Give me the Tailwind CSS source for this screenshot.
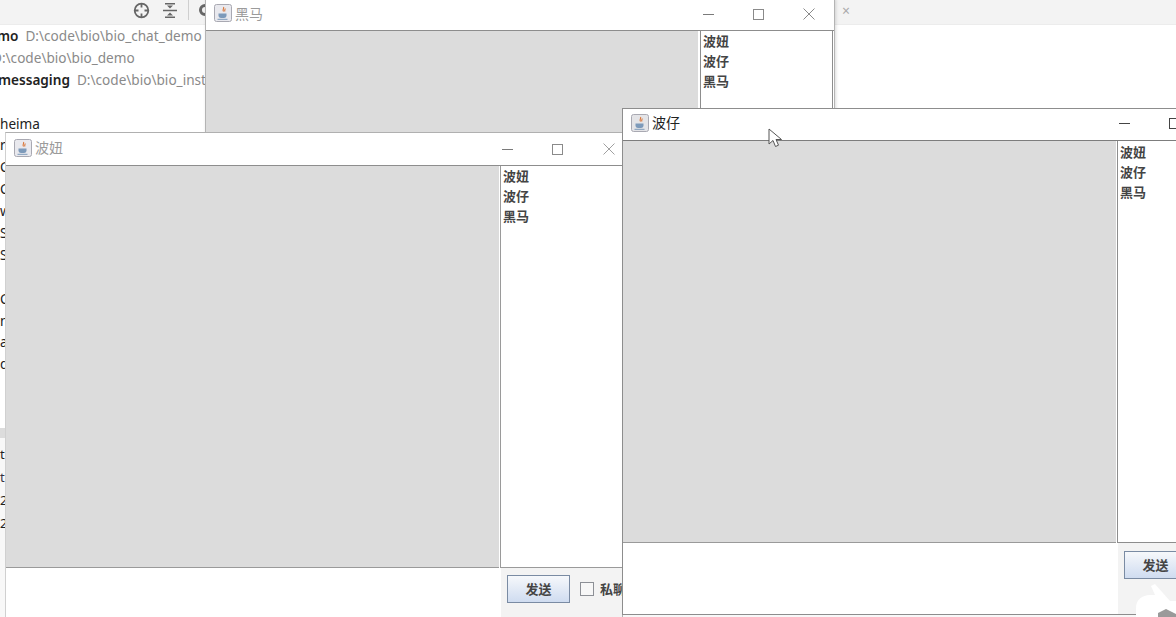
<!DOCTYPE html>
<html lang="en">
<head>
    <meta charset="UTF-8">
    <title>Chat windows</title>
    <script src="https://cdn.jsdelivr.net/npm/@tailwindcss/browser@4"></script>
</head>
<body class="bg-white">
<div class="relative w-[1176px] h-[617px] overflow-hidden bg-white text-[#222] font-['Noto_Sans','Noto_Sans_CJK_SC',sans-serif]">

    <!-- IDE behind the windows -->
    <div class="flex flex-col h-full">
        <div class="flex items-center h-[25px] bg-[#f3f3f3] border-b border-[#ececec]">
            <div class="flex items-center w-[834px] pl-[133px] pb-[4px]">
                <svg class="w-[17px] h-[17px]" viewBox="0 0 17 17" fill="none" stroke="#666" stroke-width="1.8"><circle cx="8.5" cy="8.5" r="6.8"/><path d="M8.5 1.500v4M8.500 11.500v4M1.500 8.500h4M11.500 8.500h4"/></svg>
                <svg class="ml-[13px] w-[14px] h-[17px]" viewBox="0 0 14 17"><path d="M2 1h10v1.400H2zM0 7.800h14v1.400H0zM2 14.600h10V16H2zM4 3.500h6L7 6.500zM4 13.500h6L7 10.500z" fill="#666"/></svg>
                <div class="ml-[11px] w-px h-[20px] bg-[#cfcfcf]"></div>
                <svg class="ml-[9px] w-[14px] h-[14px]" viewBox="0 0 14 14"><circle cx="7" cy="7" r="4.500" fill="none" stroke="#666" stroke-width="3"/></svg>
            </div>
            <div class="pl-[8px] pb-[3px] text-[#aaa] text-[14px]">×</div>
        </div>
        <div class="flex flex-col text-[13.6px] leading-[22px] whitespace-nowrap">
            <div class="h-[21.9px] -ml-[3px]"><b class="font-semibold">mo</b><span class="ml-[7px] text-[#8a8a8a]">D:\code\bio\bio_chat_demo</span></div>
            <div class="h-[21.9px] text-[#8a8a8a] -ml-[8px]">D:\code\bio\bio_demo</div>
            <div class="h-[21.9px] -ml-[2px]"><b class="font-semibold">messaging</b><span class="ml-[7px] text-[#8a8a8a]">D:\code\bio\bio_inst</span></div>
            <div class="h-[21.9px]"></div>
            <div class="h-[21.9px]">heima</div>
            <div class="h-[21.9px]">r</div>
            <div class="h-[21.9px]">C</div>
            <div class="h-[21.9px]">C</div>
            <div class="h-[21.9px]">w</div>
            <div class="h-[21.9px]">S</div>
            <div class="h-[21.9px]">S</div>
            <div class="h-[21.9px]"></div>
            <div class="h-[21.9px]">C</div>
            <div class="h-[21.9px]">n</div>
            <div class="h-[21.9px]">a</div>
            <div class="h-[21.9px]">d</div>
        </div>
        <div class="mt-[53px] h-[10px] bg-[#dcdcdc]"></div>
        <div class="flex flex-col flex-1 text-[13px] leading-[23px] bg-[#f8f8f8] pt-[5px]">
            <div>tl</div>
            <div class="text-[#334]">t</div>
            <div>2</div>
            <div>2</div>
        </div>
    </div>

    <!-- 黑马 window -->
    <section class="absolute left-[205px] top-[-1px] w-[630px] h-[300px] bg-white border border-[#b4b4b4] shadow-[1px_0_3px_rgba(0,0,0,0.15)] flex flex-col">
        <header class="flex items-center h-[30px] pl-[8px] pb-[4px] shrink-0">
            <svg class="w-[18px] h-[18px]" viewBox="0 0 18 18"><rect x="0.5" y="0.5" width="17" height="17" rx="2" fill="#e9e9ee" stroke="#a9a9b2"/><path d="M9.500 3c1 1.500-1.500 2 0 4.500M11 4.500c.6 1-1 1.400 0 3" fill="none" stroke="#d9773a" stroke-width="1.100"/><path d="M4.500 9.500h8v2.500a2.500 2.500 0 0 1-2.500 2h-3a2.500 2.500 0 0 1-2.500-2z" fill="#7d9aba"/><path d="M3.500 15.300h10" stroke="#7d9aba"/></svg>
            <span class="ml-[3px] text-[14px] text-[#9b9b9b]">黑马</span>
            <div class="ml-auto flex items-center pr-[19px] mt-[2px]">
                <span class="w-[11px] h-px bg-[#7a7a7a]"></span>
                <span class="ml-[39px] w-[11px] h-[11px] border border-[#8a8a8a]"></span>
                <svg class="ml-[39px] w-[12px] h-[12px]" viewBox="0 0 12 12" stroke="#8a8a8a"><path d="M.5.500l11 11M11.500.500l-11 11"/></svg>
            </div>
        </header>
        <div class="flex flex-1 border-t border-[#8d8d8d]">
            <div class="w-[492px] bg-[#dcdcdc]"></div>
            <ul class="ml-[2px] mr-px flex-1 border-x border-[#8d8d8d] pl-[2px] text-[13px] leading-[20px] font-semibold text-[#444]">
                <li>波妞</li>
                <li>波仔</li>
                <li>黑马</li>
            </ul>
        </div>
    </section>

    <!-- 波妞 window -->
    <section class="absolute left-[5px] top-[132px] w-[618px] h-[500px] bg-white border border-[#b0b0b0] border-l-[#d0d0d0] flex flex-col">
        <header class="flex items-center h-[32px] pl-[8px] pb-[3px] shrink-0">
            <svg class="w-[18px] h-[18px]" viewBox="0 0 18 18"><rect x="0.5" y="0.5" width="17" height="17" rx="2" fill="#e9e9ee" stroke="#a9a9b2"/><path d="M9.500 3c1 1.500-1.500 2 0 4.500M11 4.500c.6 1-1 1.400 0 3" fill="none" stroke="#d9773a" stroke-width="1.100"/><path d="M4.500 9.500h8v2.500a2.500 2.500 0 0 1-2.500 2h-3a2.500 2.500 0 0 1-2.500-2z" fill="#7d9aba"/><path d="M3.500 15.300h10" stroke="#7d9aba"/></svg>
            <span class="ml-[3px] text-[14px] text-[#9b9b9b]">波妞</span>
            <div class="absolute left-[496px] top-[10px] flex items-center">
                <span class="w-[11px] h-px bg-[#7a7a7a]"></span>
                <span class="ml-[39px] w-[11px] h-[11px] border border-[#8a8a8a]"></span>
                <svg class="ml-[40px] w-[12px] h-[12px]" viewBox="0 0 12 12" stroke="#a0a0a0"><path d="M.5.500l11 11M11.500.500l-11 11"/></svg>
            </div>
        </header>
        <div class="flex h-[403px] shrink-0 border-t border-[#8d8d8d]">
            <div class="w-[493px] bg-[#dcdcdc] border-b border-[#9a9a9a]"></div>
            <ul class="ml-px flex-1 border-l border-b border-[#9a9a9a] pl-[2px] text-[13px] leading-[20px] font-semibold text-[#444]">
                <li>波妞</li>
                <li>波仔</li>
                <li>黑马</li>
            </ul>
        </div>
        <div class="flex flex-1">
            <div class="w-[495px] shrink-0"></div>
            <div class="flex-1 min-w-0 overflow-hidden bg-[#f3f3f3] flex items-start pl-[6px] pt-[7px]">
                <button class="shrink-0 w-[63px] h-[28px] pt-[2px] border border-[#7a8ba3] bg-gradient-to-b from-[#f6f8fb] to-[#cfdcf0] text-[13px] font-semibold text-[#444]">发送</button>
                <span class="shrink-0 ml-[10px] mt-[7px] w-[14px] h-[14px] border border-[#8d9096] bg-[#f7f7f7]"></span>
                <span class="shrink-0 whitespace-nowrap ml-[6px] mt-[5px] text-[13px] leading-[18px] font-semibold text-[#444]">私聊</span>
            </div>
        </div>
    </section>

    <!-- 波仔 window, focused -->
    <section class="absolute left-[622px] top-[108px] w-[600px] h-[507px] bg-white border border-[#8d8d8d] flex flex-col">
        <header class="flex items-center h-[31px] pl-[8px] pb-[4px] shrink-0">
            <svg class="w-[18px] h-[18px]" viewBox="0 0 18 18"><rect x="0.5" y="0.5" width="17" height="17" rx="2" fill="#e4e4e7" stroke="#a9a9b2"/><path d="M9.500 3c1 1.500-1.500 2 0 4.500M11 4.500c.6 1-1 1.400 0 3" fill="none" stroke="#d9773a" stroke-width="1.100"/><path d="M4.500 9.500h8v2.500a2.500 2.500 0 0 1-2.500 2h-3a2.500 2.500 0 0 1-2.500-2z" fill="#7d9aba"/><path d="M3.500 15.300h10" stroke="#7d9aba"/></svg>
            <span class="ml-[3px] text-[14px] text-[#222]">波仔</span>
            <div class="absolute left-[496px] top-[9px] flex items-center">
                <span class="w-[11px] h-px bg-[#444]"></span>
                <span class="ml-[39px] w-[11px] h-[11px] border border-[#444]"></span>
            </div>
        </header>
        <div class="flex h-[403px] shrink-0 border-t border-[#7d7d7d]">
            <div class="w-[493px] bg-[#dcdcdc] border-b border-[#9a9a9a]"></div>
            <ul class="ml-px flex-1 border-l border-b border-[#8d8d8d] pl-[2px] pt-px text-[13px] leading-[20px] font-semibold text-[#444]">
                <li>波妞</li>
                <li>波仔</li>
                <li>黑马</li>
            </ul>
        </div>
        <div class="flex flex-1">
            <div class="w-[495px] shrink-0"></div>
            <div class="flex-1 bg-[#f3f3f3] flex items-start pl-[6px] pt-[8px]">
                <button class="shrink-0 w-[63px] h-[28px] pt-[2px] border border-[#7a8ba3] bg-gradient-to-b from-[#f6f8fb] to-[#cfdcf0] text-[13px] font-semibold text-[#444]">发送</button>
            </div>
        </div>
    </section>

    <!-- watermark blob, bottom right corner -->
    <svg class="absolute left-[1130px] top-[580px] w-[46px] h-[37px]" viewBox="0 0 46 37">
        <path d="M21 6l4-2 15 17h6v16H6V28c0-8 6-13 14-13h5z" fill="#fff"/>
        <path d="M28 33l8-4 10 5v3H28z" fill="#9a9a9a"/>
    </svg>

    <!-- mouse pointer -->
    <svg class="absolute left-[768px] top-[128px] w-[15px] h-[21px]" viewBox="0 0 15 21">
        <path d="M1 1v15l4-3.500 2.500 6 3-1.300-2.500-5.700h5.500z" fill="#fff" stroke="#555" stroke-linejoin="round"/>
    </svg>
</div>
</body>
</html>
